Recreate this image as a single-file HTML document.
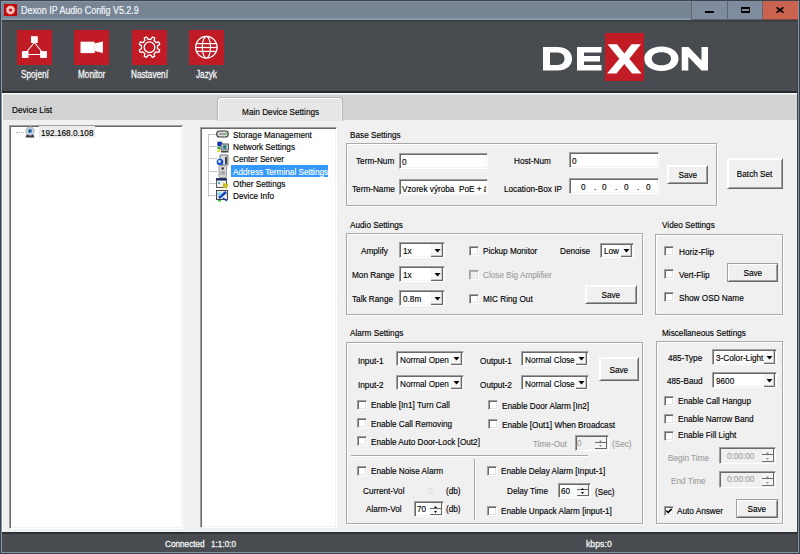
<!DOCTYPE html>
<html><head><meta charset="utf-8">
<style>
*{margin:0;padding:0;box-sizing:border-box}
html,body{width:800px;height:554px;overflow:hidden;background:#f0f0f0}
body{position:relative;font-family:"Liberation Sans",sans-serif;font-size:10px;color:#000}
.a{position:absolute}
.t{position:absolute;white-space:pre;transform-origin:0 0;line-height:12px;-webkit-text-stroke:0.15px currentColor}
.tc{position:absolute;white-space:nowrap;text-align:center;line-height:12px;-webkit-text-stroke:0.15px currentColor}
.tc span{display:inline-block;transform:scaleX(0.82)}
#frame{left:0;top:0;width:800px;height:554px;background:#3c424c}
#ring{left:1px;top:1px;width:798px;height:552px;background:#8593a7}
#title{left:2px;top:2px;width:796px;height:16px;background:#768494}
#hdr{left:2px;top:20px;width:795px;height:73px;background:#484c50;border-bottom:2px solid #282b2e}
#content{left:2px;top:93px;width:795px;height:439px;background:#f0f0f0}
#status{left:2px;top:532px;width:795px;height:20px;background:#484c50;border-top:2px solid #2e3134}
.rb{position:absolute;top:30px;width:35px;height:35px;background:#c11b25}
.lbl{position:absolute;top:69px;color:#f6f6f6;font-size:10px;white-space:nowrap;transform-origin:0 0;transform:scaleX(0.82);-webkit-text-stroke:0.3px #f6f6f6}
</style></head><body>

<div class="a" id="frame"></div>
<div class="a" id="ring"></div>
<div class="a" id="title"></div>
<div class="a" id="hdr"></div>
<div class="a" id="content"></div>
<div class="a" id="status"></div>
<!-- title bar -->
<div class="a" style="left:2px;top:18px;width:796px;height:2px;background:#8595aa"></div>
<div class="a" style="left:2px;top:20px;width:795px;height:2px;background:#3c4043"></div>
<div class="a" style="left:4px;top:4px;width:13px;height:12px;background:#c20a0a"></div>
<svg class="a" style="left:4px;top:4px" width="13" height="12" viewBox="0 0 13 12"><circle cx="6.5" cy="6" r="2.8" fill="none" stroke="#f4c4c0" stroke-width="2.6"/><circle cx="6.5" cy="6" r="4.1" fill="none" stroke="#f4c4c0" stroke-width="0.9" stroke-dasharray="1.3 1"/></svg>
<div class="a" style="left:21px;top:4px;font-size:11px;color:#f4f6fa;white-space:nowrap;transform-origin:0 0;transform:scaleX(0.81);line-height:13px;-webkit-text-stroke:0.2px #f4f6fa">Dexon IP Audio Config V5.2.9</div>
<!-- window buttons -->
<div class="a" style="left:691px;top:1px;width:36px;height:19px;background:#7f8c9d;border-left:1px solid #5d6672;border-bottom:1px solid #5d6672"></div>
<div class="a" style="left:727px;top:1px;width:35px;height:19px;background:#7f8c9d;border-left:1px solid #5d6672;border-bottom:1px solid #5d6672"></div>
<div class="a" style="left:762px;top:1px;width:36px;height:19px;background:#c96350;border-left:1px solid #5d6672;border-bottom:1px solid #7a4a40"></div>
<div class="a" style="left:705px;top:11px;width:9px;height:2px;background:#000"></div>
<div class="a" style="left:741px;top:7px;width:9px;height:6px;border:1px solid #000;border-top-width:2px;border-bottom-width:2px"></div>
<svg class="a" style="left:776px;top:7px" width="8" height="6" viewBox="0 0 8 6"><path d="M0.5 0.3 L7.5 5.7 M7.5 0.3 L0.5 5.7" stroke="#000" stroke-width="1.6"/></svg>
<!-- buttons -->
<div class="rb" style="left:17px"></div>
<div class="rb" style="left:74px"></div>
<div class="rb" style="left:132px"></div>
<div class="rb" style="left:189px"></div>
<svg class="a" style="left:17px;top:30px" width="35" height="35" viewBox="0 0 35 35">
<path d="M17.4 12.5 L9.5 22 M17.4 12.5 L25 22 M11 24.5 H24" fill="none" stroke="#fff" stroke-width="1.1"/>
<rect x="14" y="6.2" width="6.8" height="6.8" fill="#fff"/>
<rect x="4.9" y="21.1" width="6.6" height="6.8" fill="#fff"/>
<rect x="23.1" y="21.1" width="6.8" height="6.8" fill="#fff"/>
</svg>
<svg class="a" style="left:74px;top:30px" width="35" height="35" viewBox="0 0 35 35">
<rect x="6.5" y="11.7" width="14.2" height="11.4" fill="#fff"/>
<path d="M20.5 13.6 L28.9 11.4 L28.9 23.1 L20.5 21.1 Z" fill="#fff"/>
</svg>
<svg class="a" style="left:132px;top:30px" width="35" height="35" viewBox="0 0 35 35">
<g fill="none" stroke="#fff" stroke-width="1.3" stroke-linejoin="round">
<circle cx="17.5" cy="17.2" r="5.3"/>
<path d="M25.50 17.14 L25.38 18.57 L27.71 20.05 L26.74 22.40 L24.04 21.80 L23.12 22.90 L23.20 22.82 L22.10 23.74 L22.70 26.44 L20.35 27.41 L18.87 25.08 L17.44 25.20 L17.56 25.20 L16.13 25.08 L14.65 27.41 L12.30 26.44 L12.90 23.74 L11.80 22.82 L11.88 22.90 L10.96 21.80 L8.26 22.40 L7.29 20.05 L9.62 18.57 L9.50 17.14 L9.50 17.26 L9.62 15.83 L7.29 14.35 L8.26 12.00 L10.96 12.60 L11.88 11.50 L11.80 11.58 L12.90 10.66 L12.30 7.96 L14.65 6.99 L16.13 9.32 L17.56 9.20 L17.44 9.20 L18.87 9.32 L20.35 6.99 L22.70 7.96 L22.10 10.66 L23.20 11.58 L23.12 11.50 L24.04 12.60 L26.74 12.00 L27.71 14.35 L25.38 15.83 L25.50 17.26 Z"/>
</g>
</svg>
<svg class="a" style="left:189px;top:30px" width="35" height="35" viewBox="0 0 35 35">
<g fill="none" stroke="#fff" stroke-width="1.2">
<circle cx="17.4" cy="17.2" r="10.8"/>
<ellipse cx="17.4" cy="17.2" rx="4.1" ry="10.8"/>
<line x1="7.5" y1="13.6" x2="27.3" y2="13.6"/>
<line x1="6.6" y1="17.5" x2="28.2" y2="17.5"/>
<line x1="7.5" y1="21.4" x2="27.3" y2="21.4"/>
</g>
</svg>
<div class="lbl" style="left:21px">Spojení</div>
<div class="lbl" style="left:78px">Monitor</div>
<div class="lbl" style="left:131px">Nastavení</div>
<div class="lbl" style="left:196px">Jazyk</div>
<!-- logo -->
<div class="a" style="left:605px;top:33px;width:39px;height:48px;background:#c11b25"></div>
<svg class="a" style="left:540px;top:40px" width="175" height="40" viewBox="0 0 175 40">
<g fill="#fff">
<path d="M3 7 H17 C28 7 32 13 32 18.7 C32 24.5 28 30.4 17 30.4 H3 Z M10 12.5 V25 H16.5 C22 25 24.5 22.5 24.5 18.7 C24.5 15 22 12.5 16.5 12.5 Z" fill-rule="evenodd"/>
<path d="M37 7 H61.5 V12.5 H44 V16 H60 V21.5 H44 V25 H61.5 V30.4 H37 Z"/>
<path d="M67.5 4.2 H77 L84.3 13.5 L91.5 4.2 H101 L89.3 18.8 L101.5 33.5 H92 L84.3 24 L76.5 33.5 H67 L79.3 18.8 Z"/>
<path d="M121.5 6.5 C131.5 6.5 138.5 11.5 138.5 18.7 C138.5 26 131.5 30.9 121.5 30.9 C111.5 30.9 104.3 26 104.3 18.7 C104.3 11.5 111.5 6.5 121.5 6.5 Z M121.5 12.3 C115.5 12.3 111.8 15 111.8 18.7 C111.8 22.5 115.5 25.2 121.5 25.2 C127.5 25.2 131 22.5 131 18.7 C131 15 127.5 12.3 121.5 12.3 Z" fill-rule="evenodd"/>
<path d="M141.7 7 H148.5 L161.5 20.5 V7 H168 V30.4 H161.5 L148.3 16.8 V30.4 H141.7 Z"/>
</g>
</svg>


<div class="a" style="left:2px;top:93px;width:795px;height:1px;background:#f6f6f6;"></div>
<div class="a" style="left:2px;top:94px;width:795px;height:1px;background:#e6e6e6;"></div>
<div class="a" style="left:2px;top:95px;width:795px;height:25px;background:#d2d2d3;"></div>
<div class="a" style="left:2px;top:93px;width:1px;height:439px;background:#fafafa;"></div>
<div class="a" style="left:797px;top:20px;width:1px;height:532px;background:#3e444c;"></div>
<div class="a" style="left:2px;top:552px;width:796px;height:1px;background:#8593a7;"></div>
<div class="t" style="left:12px;top:104.41px;color:#000;font-size:9.5px;transform:scaleX(0.863157894736842);">Device List</div>
<div class="a" style="left:217px;top:97px;width:126px;height:24px;background:#e6e6e6;border:1px solid #b4b4b4;border-bottom:none;border-radius:4px 4px 0 0;box-shadow:inset 1px 1px 0 #fcfcfc,inset -1px 0 0 #f4f4f4"></div>
<div class="tc" style="left:180.5px;width:200px;top:106.21px;color:#000;font-size:9.5px"><span style="transform:scaleX(0.863157894736842)">Main Device Settings</span></div>
<div class="a" style="left:9px;top:125px;width:174px;height:404px;background:#fff;border-top:1px solid #a0a0a0;border-left:1px solid #a0a0a0;border-right:1px solid #fff;border-bottom:1px solid #fff;box-shadow:inset 1px 1px 0 #696969,inset -1px -1px 0 #f2f2f2"></div>
<div class="a" style="left:16px;top:132px;width:8px;border-top:1px dotted #b0b0b0"></div>
<div class="a" style="left:39px;top:126px;width:56px;height:12px;background:#ececec;"></div>
<div class="t" style="left:41px;top:126.71px;color:#000;font-size:9.5px;transform:scaleX(0.863157894736842);">192.168.0.108</div>
<svg class="a" style="left:24px;top:126px" width="12" height="12" viewBox="0 0 12 12"><path d="M1.5 11.5 L2.5 8.5 H9.5 L10.5 11.5 Z" fill="#3a4048"/><circle cx="6" cy="5" r="4.2" fill="#d0d6dc" stroke="#9aa4ac" stroke-width="0.8"/><circle cx="6" cy="5" r="2.2" fill="#4a90d0"/><circle cx="6" cy="5" r="0.9" fill="#1a3050"/></svg>
<div class="a" style="left:200px;top:127px;width:137px;height:401px;background:#fff;border-top:1px solid #a0a0a0;border-left:1px solid #a0a0a0;border-right:1px solid #fff;border-bottom:1px solid #fff;box-shadow:inset 1px 1px 0 #696969,inset -1px -1px 0 #f2f2f2"></div>
<div class="a" style="left:208px;top:134px;height:63px;border-left:1px solid #c4c4c4"></div>
<div class="a" style="left:209px;top:134.1px;width:8px;border-top:1px solid #c4c4c4"></div>
<div class="t" style="left:233px;top:129.01px;color:#000;font-size:9.5px;transform:scaleX(0.863157894736842);">Storage Management</div>
<div class="a" style="left:209px;top:146.0px;width:8px;border-top:1px solid #c4c4c4"></div>
<div class="t" style="left:233px;top:140.91px;color:#000;font-size:9.5px;transform:scaleX(0.863157894736842);">Network Settings</div>
<div class="a" style="left:209px;top:158.3px;width:8px;border-top:1px solid #c4c4c4"></div>
<div class="t" style="left:233px;top:153.21px;color:#000;font-size:9.5px;transform:scaleX(0.863157894736842);">Center Server</div>
<div class="a" style="left:209px;top:170.9px;width:8px;border-top:1px solid #c4c4c4"></div>
<div class="a" style="left:231px;top:165px;width:97px;height:12px;background:#3399ff;"></div>
<div class="t" style="left:233px;top:165.81px;color:#fff;font-size:9.5px;transform:scaleX(0.863157894736842);">Address Terminal Settings</div>
<div class="a" style="left:209px;top:182.8px;width:8px;border-top:1px solid #c4c4c4"></div>
<div class="t" style="left:233px;top:177.71px;color:#000;font-size:9.5px;transform:scaleX(0.863157894736842);">Other Settings</div>
<div class="a" style="left:209px;top:195.0px;width:8px;border-top:1px solid #c4c4c4"></div>
<div class="t" style="left:233px;top:189.91px;color:#000;font-size:9.5px;transform:scaleX(0.863157894736842);">Device Info</div>
<svg class="a" style="left:216px;top:130px" width="13" height="9" viewBox="0 0 13 9"><rect x="0.8" y="1" width="11.4" height="6" rx="2.5" fill="#dcdcdc" stroke="#3a3a3a" stroke-width="1.2"/><rect x="3" y="3.5" width="6" height="1" fill="#666"/><rect x="9" y="3" width="1.8" height="1.5" fill="#2c2"/></svg>
<svg class="a" style="left:216px;top:141px" width="13" height="12" viewBox="0 0 13 12"><rect x="1" y="0.5" width="5.5" height="5" fill="#8090a0"/><circle cx="3.7" cy="3" r="2.2" fill="#1030d0"/><rect x="5" y="3" width="7.5" height="6" fill="#c8ccd0" stroke="#333" stroke-width="0.8"/><circle cx="8.7" cy="6" r="2" fill="#208080"/><rect x="1.5" y="6" width="2.5" height="2" fill="#2a2"/><rect x="1.5" y="8.5" width="2.5" height="2.5" fill="#dd2"/><rect x="5" y="10" width="7.5" height="1.5" fill="#444"/></svg>
<svg class="a" style="left:216px;top:154px" width="13" height="12" viewBox="0 0 13 12"><path d="M4 1 H12 V11 H4 Z" fill="#d8dce8" stroke="#555" stroke-width="0.8"/><rect x="9" y="3" width="2" height="7" fill="#444"/><circle cx="4" cy="8" r="3.3" fill="#1850c8"/><circle cx="3.5" cy="7.5" r="1.4" fill="#e0e8ff"/></svg>
<svg class="a" style="left:216px;top:165px" width="13" height="13" viewBox="0 0 13 13"><rect x="3" y="0.5" width="7.5" height="12" rx="1.2" fill="#d8d8d8" stroke="#888" stroke-width="0.8"/><circle cx="6.7" cy="3.5" r="1.3" fill="#333"/><rect x="4.5" y="6" width="4.5" height="4" fill="#aaa"/></svg>
<svg class="a" style="left:216px;top:178px" width="13" height="11" viewBox="0 0 13 11"><rect x="0.5" y="0.5" width="10" height="9" fill="#f0f0f0" stroke="#333" stroke-width="0.8"/><rect x="0.5" y="0.5" width="10" height="2" fill="#102060"/><rect x="2" y="4" width="2" height="2" fill="#4ab"/><path d="M7 5 L12.5 6 L11 10.5 L7 10 Z" fill="#c8c020"/></svg>
<svg class="a" style="left:216px;top:190px" width="13" height="12" viewBox="0 0 13 12"><rect x="0.5" y="0.5" width="11" height="9" fill="#e8e8e8" stroke="#333" stroke-width="0.9"/><path d="M3 8 L10 2" stroke="#1040c0" stroke-width="2.5"/><circle cx="3.5" cy="4" r="2" fill="#80d0f0"/><rect x="2" y="10" width="3" height="1.5" fill="#2c2"/><path d="M7 8 L11 11" stroke="#1040c0" stroke-width="1.5"/></svg>
<div class="t" style="left:350px;top:129.21px;color:#000;font-size:9.5px;transform:scaleX(0.863157894736842);">Base Settings</div>
<div class="a" style="left:347px;top:144px;width:371px;height:63px;border:1px solid #fff"></div>
<div class="a" style="left:346px;top:143px;width:371px;height:63px;border:1px solid #a9a9a9"></div>
<div class="t" style="left:355.5px;top:155.11px;color:#000;font-size:9.5px;transform:scaleX(0.863157894736842);">Term-Num</div>
<div class="a" style="left:399px;top:153px;width:89px;height:16px;background:#fff;border-top:1px solid #a0a0a0;border-left:1px solid #a0a0a0;border-right:1px solid #fff;border-bottom:1px solid #fff;box-shadow:inset 1px 1px 0 #696969,inset -1px -1px 0 #f2f2f2"></div>
<div class="t" style="left:401.5px;top:155.91px;color:#000;font-size:9.5px;transform:scaleX(0.863157894736842);">0</div>
<div class="t" style="left:352px;top:182.71px;color:#000;font-size:9.5px;transform:scaleX(0.863157894736842);">Term-Name</div>
<div class="a" style="left:399px;top:179px;width:89px;height:16px;background:#fff;border-top:1px solid #a0a0a0;border-left:1px solid #a0a0a0;border-right:1px solid #fff;border-bottom:1px solid #fff;box-shadow:inset 1px 1px 0 #696969,inset -1px -1px 0 #f2f2f2"></div>
<div class="a" style="left:401px;top:181px;width:85px;height:13px;overflow:hidden">
<div class="t" style="left:0.5px;top:1.91px;color:#000;font-size:9.5px;transform:scaleX(0.863157894736842);">Vzorek výroba  PoE + ä</div>
</div>
<div class="t" style="left:514px;top:155.11px;color:#000;font-size:9.5px;transform:scaleX(0.863157894736842);">Host-Num</div>
<div class="a" style="left:569px;top:152px;width:90px;height:16px;background:#fff;border-top:1px solid #a0a0a0;border-left:1px solid #a0a0a0;border-right:1px solid #fff;border-bottom:1px solid #fff;box-shadow:inset 1px 1px 0 #696969,inset -1px -1px 0 #f2f2f2"></div>
<div class="t" style="left:571.5px;top:154.91px;color:#000;font-size:9.5px;transform:scaleX(0.863157894736842);">0</div>
<div class="t" style="left:503.5px;top:182.71px;color:#000;font-size:9.5px;transform:scaleX(0.863157894736842);">Location-Box IP</div>
<div class="a" style="left:569px;top:178px;width:90px;height:16px;background:#fff;border-top:1px solid #a0a0a0;border-left:1px solid #a0a0a0;border-right:1px solid #fff;border-bottom:1px solid #fff;box-shadow:inset 1px 1px 0 #696969,inset -1px -1px 0 #f2f2f2"></div>
<div class="t" style="left:581px;top:180.71px;color:#000;font-size:9.5px;transform:scaleX(0.863157894736842);">0</div>
<div class="t" style="left:602.3px;top:180.71px;color:#000;font-size:9.5px;transform:scaleX(0.863157894736842);">0</div>
<div class="t" style="left:624px;top:180.71px;color:#000;font-size:9.5px;transform:scaleX(0.863157894736842);">0</div>
<div class="t" style="left:645.9px;top:180.71px;color:#000;font-size:9.5px;transform:scaleX(0.863157894736842);">0</div>
<div class="t" style="left:593.5px;top:180.71px;color:#000;font-size:9.5px;transform:scaleX(0.863157894736842);">.</div>
<div class="t" style="left:615.2px;top:180.71px;color:#000;font-size:9.5px;transform:scaleX(0.863157894736842);">.</div>
<div class="t" style="left:636.7px;top:180.71px;color:#000;font-size:9.5px;transform:scaleX(0.863157894736842);">.</div>
<div class="a" style="left:667px;top:165px;width:41px;height:19px;background:#f0f0f0;border-top:1px solid #fff;border-left:1px solid #fff;border-right:1px solid #696969;border-bottom:1px solid #696969;box-shadow:inset 1px 1px 0 #fff,inset -1px -1px 0 #a0a0a0"></div>
<div class="tc" style="left:587.5px;width:200px;top:168.81px;color:#000;font-size:9.5px"><span style="transform:scaleX(0.863157894736842)">Save</span></div>
<div class="a" style="left:727px;top:158px;width:56px;height:31px;background:#f0f0f0;border-top:1px solid #fff;border-left:1px solid #fff;border-right:1px solid #696969;border-bottom:1px solid #696969;box-shadow:inset 1px 1px 0 #fff,inset -1px -1px 0 #a0a0a0"></div>
<div class="tc" style="left:655.0px;width:200px;top:168.01px;color:#000;font-size:9.5px"><span style="transform:scaleX(0.863157894736842)">Batch Set</span></div>
<div class="t" style="left:350px;top:218.91px;color:#000;font-size:9.5px;transform:scaleX(0.863157894736842);">Audio Settings</div>
<div class="a" style="left:347px;top:234px;width:297px;height:82px;border:1px solid #fff"></div>
<div class="a" style="left:346px;top:233px;width:297px;height:82px;border:1px solid #a9a9a9"></div>
<div class="t" style="left:360.6px;top:244.91px;color:#000;font-size:9.5px;transform:scaleX(0.863157894736842);">Amplify</div>
<div class="a" style="left:399px;top:242px;width:46px;height:16px;background:#fff;border-top:1px solid #a0a0a0;border-left:1px solid #a0a0a0;border-right:1px solid #fff;border-bottom:1px solid #fff;box-shadow:inset 1px 1px 0 #696969,inset -1px -1px 0 #f2f2f2"></div>
<div class="a" style="left:431px;top:244px;width:12px;height:13px;background:#f6f6f6;border-right:1px solid #696969;border-bottom:1px solid #696969;box-shadow:inset -1px -1px 0 #c8c8c8"></div>
<svg class="a" style="left:433.5px;top:248.5px" width="7" height="4" viewBox="0 0 7 4"><path d="M0.5 0 H6.5 L3.5 3.5 Z" fill="#000"/></svg>
<div class="a" style="left:401px;top:244px;width:30px;height:12px;overflow:hidden">
<div class="t" style="left:1.5px;top:1.21px;color:#000;font-size:9.5px;transform:scaleX(0.863157894736842);">1x</div>
</div>
<div class="t" style="left:352px;top:268.71px;color:#000;font-size:9.5px;transform:scaleX(0.863157894736842);">Mon Range</div>
<div class="a" style="left:399px;top:266px;width:46px;height:16px;background:#fff;border-top:1px solid #a0a0a0;border-left:1px solid #a0a0a0;border-right:1px solid #fff;border-bottom:1px solid #fff;box-shadow:inset 1px 1px 0 #696969,inset -1px -1px 0 #f2f2f2"></div>
<div class="a" style="left:431px;top:268px;width:12px;height:13px;background:#f6f6f6;border-right:1px solid #696969;border-bottom:1px solid #696969;box-shadow:inset -1px -1px 0 #c8c8c8"></div>
<svg class="a" style="left:433.5px;top:272.5px" width="7" height="4" viewBox="0 0 7 4"><path d="M0.5 0 H6.5 L3.5 3.5 Z" fill="#000"/></svg>
<div class="a" style="left:401px;top:268px;width:30px;height:12px;overflow:hidden">
<div class="t" style="left:1.5px;top:0.91px;color:#000;font-size:9.5px;transform:scaleX(0.863157894736842);">1x</div>
</div>
<div class="t" style="left:352px;top:292.61px;color:#000;font-size:9.5px;transform:scaleX(0.863157894736842);">Talk Range</div>
<div class="a" style="left:399px;top:290px;width:46px;height:16px;background:#fff;border-top:1px solid #a0a0a0;border-left:1px solid #a0a0a0;border-right:1px solid #fff;border-bottom:1px solid #fff;box-shadow:inset 1px 1px 0 #696969,inset -1px -1px 0 #f2f2f2"></div>
<div class="a" style="left:431px;top:292px;width:12px;height:13px;background:#f6f6f6;border-right:1px solid #696969;border-bottom:1px solid #696969;box-shadow:inset -1px -1px 0 #c8c8c8"></div>
<svg class="a" style="left:433.5px;top:296.5px" width="7" height="4" viewBox="0 0 7 4"><path d="M0.5 0 H6.5 L3.5 3.5 Z" fill="#000"/></svg>
<div class="a" style="left:401px;top:292px;width:30px;height:12px;overflow:hidden">
<div class="t" style="left:1.5px;top:0.91px;color:#000;font-size:9.5px;transform:scaleX(0.863157894736842);">0.8m</div>
</div>
<div class="a" style="left:469px;top:246px;width:9.5px;height:9.5px;background:#fff;border-top:1px solid #a0a0a0;border-left:1px solid #a0a0a0;border-right:1px solid #fff;border-bottom:1px solid #fff;box-shadow:inset 1px 1px 0 #696969,inset -1px -1px 0 #e3e3e3"></div>
<div class="t" style="left:482.7px;top:245.41px;color:#000;font-size:9.5px;transform:scaleX(0.863157894736842);">Pickup Monitor</div>
<div class="a" style="left:469px;top:270px;width:9.5px;height:9.5px;background:#f0f0f0;border-top:1px solid #a0a0a0;border-left:1px solid #a0a0a0;border-right:1px solid #fff;border-bottom:1px solid #fff;box-shadow:inset 1px 1px 0 #b0b0b0,inset -1px -1px 0 #e3e3e3"></div>
<div class="t" style="left:482.7px;top:269.21px;color:#a0a0a0;font-size:9.5px;transform:scaleX(0.863157894736842);">Close Big Amplifier</div>
<div class="a" style="left:469px;top:294px;width:9.5px;height:9.5px;background:#fff;border-top:1px solid #a0a0a0;border-left:1px solid #a0a0a0;border-right:1px solid #fff;border-bottom:1px solid #fff;box-shadow:inset 1px 1px 0 #696969,inset -1px -1px 0 #e3e3e3"></div>
<div class="t" style="left:482.7px;top:293.01px;color:#000;font-size:9.5px;transform:scaleX(0.863157894736842);">MIC Ring Out</div>
<div class="t" style="left:560px;top:245.41px;color:#000;font-size:9.5px;transform:scaleX(0.863157894736842);">Denoise</div>
<div class="a" style="left:600px;top:243px;width:34px;height:15px;background:#fff;border-top:1px solid #a0a0a0;border-left:1px solid #a0a0a0;border-right:1px solid #fff;border-bottom:1px solid #fff;box-shadow:inset 1px 1px 0 #696969,inset -1px -1px 0 #f2f2f2"></div>
<div class="a" style="left:621px;top:245px;width:11px;height:12px;background:#f6f6f6;border-right:1px solid #696969;border-bottom:1px solid #696969;box-shadow:inset -1px -1px 0 #c8c8c8"></div>
<svg class="a" style="left:623.0px;top:249.0px" width="7" height="4" viewBox="0 0 7 4"><path d="M0.5 0 H6.5 L3.5 3.5 Z" fill="#000"/></svg>
<div class="a" style="left:602px;top:245px;width:19px;height:11px;overflow:hidden">
<div class="t" style="left:1.5px;top:0.41px;color:#000;font-size:9.5px;transform:scaleX(0.863157894736842);">Low</div>
</div>
<div class="a" style="left:585px;top:285px;width:52px;height:19px;background:#f0f0f0;border-top:1px solid #fff;border-left:1px solid #fff;border-right:1px solid #696969;border-bottom:1px solid #696969;box-shadow:inset 1px 1px 0 #fff,inset -1px -1px 0 #a0a0a0"></div>
<div class="tc" style="left:511.0px;width:200px;top:289.41px;color:#000;font-size:9.5px"><span style="transform:scaleX(0.863157894736842)">Save</span></div>
<div class="t" style="left:662px;top:218.91px;color:#000;font-size:9.5px;transform:scaleX(0.863157894736842);">Video Settings</div>
<div class="a" style="left:656px;top:235px;width:128px;height:81px;border:1px solid #fff"></div>
<div class="a" style="left:655px;top:234px;width:128px;height:81px;border:1px solid #a9a9a9"></div>
<div class="a" style="left:664px;top:246px;width:9.5px;height:9.5px;background:#fff;border-top:1px solid #a0a0a0;border-left:1px solid #a0a0a0;border-right:1px solid #fff;border-bottom:1px solid #fff;box-shadow:inset 1px 1px 0 #696969,inset -1px -1px 0 #e3e3e3"></div>
<div class="t" style="left:679px;top:246.01px;color:#000;font-size:9.5px;transform:scaleX(0.863157894736842);">Horiz-Flip</div>
<div class="a" style="left:664px;top:269px;width:9.5px;height:9.5px;background:#fff;border-top:1px solid #a0a0a0;border-left:1px solid #a0a0a0;border-right:1px solid #fff;border-bottom:1px solid #fff;box-shadow:inset 1px 1px 0 #696969,inset -1px -1px 0 #e3e3e3"></div>
<div class="t" style="left:679px;top:268.91px;color:#000;font-size:9.5px;transform:scaleX(0.863157894736842);">Vert-Flip</div>
<div class="a" style="left:664px;top:292px;width:9.5px;height:9.5px;background:#fff;border-top:1px solid #a0a0a0;border-left:1px solid #a0a0a0;border-right:1px solid #fff;border-bottom:1px solid #fff;box-shadow:inset 1px 1px 0 #696969,inset -1px -1px 0 #e3e3e3"></div>
<div class="t" style="left:679px;top:291.91px;color:#000;font-size:9.5px;transform:scaleX(0.863157894736842);">Show OSD Name</div>
<div class="a" style="left:727px;top:263px;width:51px;height:19px;background:#f0f0f0;border-top:1px solid #a0a0a0;border-left:1px solid #a0a0a0;border-right:1px solid #696969;border-bottom:1px solid #696969;box-shadow:inset 1px 1px 0 #fff,inset -1px -1px 0 #a0a0a0"></div>
<div class="tc" style="left:652.5px;width:200px;top:267.31px;color:#000;font-size:9.5px"><span style="transform:scaleX(0.863157894736842)">Save</span></div>
<div class="t" style="left:350px;top:326.61px;color:#000;font-size:9.5px;transform:scaleX(0.863157894736842);">Alarm Settings</div>
<div class="a" style="left:347px;top:343px;width:297px;height:182px;border:1px solid #fff"></div>
<div class="a" style="left:346px;top:342px;width:297px;height:182px;border:1px solid #a9a9a9"></div>
<div class="t" style="left:357.5px;top:354.71px;color:#000;font-size:9.5px;transform:scaleX(0.863157894736842);">Input-1</div>
<div class="a" style="left:396px;top:351px;width:68px;height:15px;background:#fff;border-top:1px solid #a0a0a0;border-left:1px solid #a0a0a0;border-right:1px solid #fff;border-bottom:1px solid #fff;box-shadow:inset 1px 1px 0 #696969,inset -1px -1px 0 #f2f2f2"></div>
<div class="a" style="left:451px;top:353px;width:11px;height:12px;background:#f6f6f6;border-right:1px solid #696969;border-bottom:1px solid #696969;box-shadow:inset -1px -1px 0 #c8c8c8"></div>
<svg class="a" style="left:453.0px;top:357.0px" width="7" height="4" viewBox="0 0 7 4"><path d="M0.5 0 H6.5 L3.5 3.5 Z" fill="#000"/></svg>
<div class="a" style="left:398px;top:353px;width:53px;height:11px;overflow:hidden">
<div class="t" style="left:1.5px;top:0.61px;color:#000;font-size:9.5px;transform:scaleX(0.863157894736842);">Normal Open</div>
</div>
<div class="t" style="left:357.5px;top:378.71px;color:#000;font-size:9.5px;transform:scaleX(0.863157894736842);">Input-2</div>
<div class="a" style="left:396px;top:375px;width:68px;height:15px;background:#fff;border-top:1px solid #a0a0a0;border-left:1px solid #a0a0a0;border-right:1px solid #fff;border-bottom:1px solid #fff;box-shadow:inset 1px 1px 0 #696969,inset -1px -1px 0 #f2f2f2"></div>
<div class="a" style="left:451px;top:377px;width:11px;height:12px;background:#f6f6f6;border-right:1px solid #696969;border-bottom:1px solid #696969;box-shadow:inset -1px -1px 0 #c8c8c8"></div>
<svg class="a" style="left:453.0px;top:381.0px" width="7" height="4" viewBox="0 0 7 4"><path d="M0.5 0 H6.5 L3.5 3.5 Z" fill="#000"/></svg>
<div class="a" style="left:398px;top:377px;width:53px;height:11px;overflow:hidden">
<div class="t" style="left:1.5px;top:0.61px;color:#000;font-size:9.5px;transform:scaleX(0.863157894736842);">Normal Open</div>
</div>
<div class="t" style="left:479.5px;top:354.71px;color:#000;font-size:9.5px;transform:scaleX(0.863157894736842);">Output-1</div>
<div class="a" style="left:521px;top:351px;width:68px;height:15px;background:#fff;border-top:1px solid #a0a0a0;border-left:1px solid #a0a0a0;border-right:1px solid #fff;border-bottom:1px solid #fff;box-shadow:inset 1px 1px 0 #696969,inset -1px -1px 0 #f2f2f2"></div>
<div class="a" style="left:576px;top:353px;width:11px;height:12px;background:#f6f6f6;border-right:1px solid #696969;border-bottom:1px solid #696969;box-shadow:inset -1px -1px 0 #c8c8c8"></div>
<svg class="a" style="left:578.0px;top:357.0px" width="7" height="4" viewBox="0 0 7 4"><path d="M0.5 0 H6.5 L3.5 3.5 Z" fill="#000"/></svg>
<div class="a" style="left:523px;top:353px;width:53px;height:11px;overflow:hidden">
<div class="t" style="left:1.5px;top:0.61px;color:#000;font-size:9.5px;transform:scaleX(0.863157894736842);">Normal Close</div>
</div>
<div class="t" style="left:479.5px;top:378.71px;color:#000;font-size:9.5px;transform:scaleX(0.863157894736842);">Output-2</div>
<div class="a" style="left:521px;top:375px;width:68px;height:15px;background:#fff;border-top:1px solid #a0a0a0;border-left:1px solid #a0a0a0;border-right:1px solid #fff;border-bottom:1px solid #fff;box-shadow:inset 1px 1px 0 #696969,inset -1px -1px 0 #f2f2f2"></div>
<div class="a" style="left:576px;top:377px;width:11px;height:12px;background:#f6f6f6;border-right:1px solid #696969;border-bottom:1px solid #696969;box-shadow:inset -1px -1px 0 #c8c8c8"></div>
<svg class="a" style="left:578.0px;top:381.0px" width="7" height="4" viewBox="0 0 7 4"><path d="M0.5 0 H6.5 L3.5 3.5 Z" fill="#000"/></svg>
<div class="a" style="left:523px;top:377px;width:53px;height:11px;overflow:hidden">
<div class="t" style="left:1.5px;top:0.61px;color:#000;font-size:9.5px;transform:scaleX(0.863157894736842);">Normal Close</div>
</div>
<div class="a" style="left:599px;top:357px;width:40px;height:24px;background:#f0f0f0;border-top:1px solid #fff;border-left:1px solid #fff;border-right:1px solid #696969;border-bottom:1px solid #696969;box-shadow:inset 1px 1px 0 #fff,inset -1px -1px 0 #a0a0a0"></div>
<div class="tc" style="left:519.0px;width:200px;top:363.91px;color:#000;font-size:9.5px"><span style="transform:scaleX(0.863157894736842)">Save</span></div>
<div class="a" style="left:357px;top:400px;width:9.5px;height:9.5px;background:#fff;border-top:1px solid #a0a0a0;border-left:1px solid #a0a0a0;border-right:1px solid #fff;border-bottom:1px solid #fff;box-shadow:inset 1px 1px 0 #696969,inset -1px -1px 0 #e3e3e3"></div>
<div class="t" style="left:371px;top:399.11px;color:#000;font-size:9.5px;transform:scaleX(0.863157894736842);">Enable [In1] Turn Call</div>
<div class="a" style="left:357px;top:418px;width:9.5px;height:9.5px;background:#fff;border-top:1px solid #a0a0a0;border-left:1px solid #a0a0a0;border-right:1px solid #fff;border-bottom:1px solid #fff;box-shadow:inset 1px 1px 0 #696969,inset -1px -1px 0 #e3e3e3"></div>
<div class="t" style="left:371px;top:417.91px;color:#000;font-size:9.5px;transform:scaleX(0.863157894736842);">Enable Call Removing</div>
<div class="a" style="left:357px;top:436px;width:9.5px;height:9.5px;background:#fff;border-top:1px solid #a0a0a0;border-left:1px solid #a0a0a0;border-right:1px solid #fff;border-bottom:1px solid #fff;box-shadow:inset 1px 1px 0 #696969,inset -1px -1px 0 #e3e3e3"></div>
<div class="t" style="left:371px;top:435.91px;color:#000;font-size:9.5px;transform:scaleX(0.863157894736842);">Enable Auto Door-Lock [Out2]</div>
<div class="a" style="left:488px;top:400px;width:9.5px;height:9.5px;background:#fff;border-top:1px solid #a0a0a0;border-left:1px solid #a0a0a0;border-right:1px solid #fff;border-bottom:1px solid #fff;box-shadow:inset 1px 1px 0 #696969,inset -1px -1px 0 #e3e3e3"></div>
<div class="t" style="left:502px;top:399.71px;color:#000;font-size:9.5px;transform:scaleX(0.863157894736842);">Enable Door Alarm [In2]</div>
<div class="a" style="left:488px;top:419px;width:9.5px;height:9.5px;background:#fff;border-top:1px solid #a0a0a0;border-left:1px solid #a0a0a0;border-right:1px solid #fff;border-bottom:1px solid #fff;box-shadow:inset 1px 1px 0 #696969,inset -1px -1px 0 #e3e3e3"></div>
<div class="t" style="left:502px;top:418.71px;color:#000;font-size:9.5px;transform:scaleX(0.863157894736842);">Enable [Out1] When Broadcast</div>
<div class="t" style="left:532.6px;top:438.11px;color:#a0a0a0;font-size:9.5px;transform:scaleX(0.863157894736842);">Time-Out</div>
<div class="a" style="left:575px;top:435px;width:34px;height:16px;background:#f0f0f0;border-top:1px solid #a0a0a0;border-left:1px solid #a0a0a0;border-right:1px solid #fff;border-bottom:1px solid #fff;box-shadow:inset 1px 1px 0 #696969,inset -1px -1px 0 #f2f2f2"></div>
<div class="a" style="left:595px;top:437px;width:12px;height:6px;background:#f4f4f4;border-right:1px solid #696969;border-bottom:1px solid #696969"></div>
<div class="a" style="left:595px;top:443px;width:12px;height:6px;background:#f4f4f4;border-right:1px solid #696969;border-bottom:1px solid #696969"></div>
<svg class="a" style="left:599.0px;top:439.5px" width="3" height="2" viewBox="0 0 3 2"><path d="M0 2 H3 L1.5 0 Z" fill="#909090"/></svg>
<svg class="a" style="left:599.0px;top:445.0px" width="3" height="2" viewBox="0 0 3 2"><path d="M0 0 H3 L1.5 2 Z" fill="#909090"/></svg>
<div class="t" style="left:577.4px;top:437.41px;color:#a0a0a0;font-size:9.5px;transform:scaleX(0.863157894736842);">0</div>
<div class="t" style="left:611.7px;top:438.11px;color:#a0a0a0;font-size:9.5px;transform:scaleX(0.863157894736842);">(Sec)</div>
<div class="a" style="left:351px;top:455px;width:237px;height:1px;background:#a9a9a9;"></div>
<div class="a" style="left:351px;top:456px;width:237px;height:1px;background:#fff;"></div>
<div class="a" style="left:474px;top:459px;width:1px;height:61px;background:#a9a9a9;"></div>
<div class="a" style="left:475px;top:459px;width:1px;height:61px;background:#fff;"></div>
<div class="a" style="left:357px;top:466px;width:9.5px;height:9.5px;background:#fff;border-top:1px solid #a0a0a0;border-left:1px solid #a0a0a0;border-right:1px solid #fff;border-bottom:1px solid #fff;box-shadow:inset 1px 1px 0 #696969,inset -1px -1px 0 #e3e3e3"></div>
<div class="t" style="left:370.6px;top:465.01px;color:#000;font-size:9.5px;transform:scaleX(0.863157894736842);">Enable Noise Alarm</div>
<div class="t" style="left:363.2px;top:484.91px;color:#000;font-size:9.5px;transform:scaleX(0.863157894736842);">Current-Vol</div>
<div class="t" style="left:427.5px;top:484.91px;color:#dcdcdc;font-size:9.5px;transform:scaleX(0.863157894736842);">0</div>
<div class="t" style="left:446.2px;top:484.91px;color:#000;font-size:9.5px;transform:scaleX(0.863157894736842);">(db)</div>
<div class="t" style="left:366px;top:502.91px;color:#000;font-size:9.5px;transform:scaleX(0.863157894736842);">Alarm-Vol</div>
<div class="a" style="left:414px;top:501px;width:30px;height:16px;background:#fff;border-top:1px solid #a0a0a0;border-left:1px solid #a0a0a0;border-right:1px solid #fff;border-bottom:1px solid #fff;box-shadow:inset 1px 1px 0 #696969,inset -1px -1px 0 #f2f2f2"></div>
<div class="a" style="left:430px;top:503px;width:12px;height:6px;background:#f4f4f4;border-right:1px solid #696969;border-bottom:1px solid #696969"></div>
<div class="a" style="left:430px;top:509px;width:12px;height:6px;background:#f4f4f4;border-right:1px solid #696969;border-bottom:1px solid #696969"></div>
<svg class="a" style="left:434.0px;top:505.5px" width="3" height="2" viewBox="0 0 3 2"><path d="M0 2 H3 L1.5 0 Z" fill="#000"/></svg>
<svg class="a" style="left:434.0px;top:511.0px" width="3" height="2" viewBox="0 0 3 2"><path d="M0 0 H3 L1.5 2 Z" fill="#000"/></svg>
<div class="t" style="left:417.2px;top:503.41px;color:#000;font-size:9.5px;transform:scaleX(0.863157894736842);">70</div>
<div class="t" style="left:446.2px;top:502.91px;color:#000;font-size:9.5px;transform:scaleX(0.863157894736842);">(db)</div>
<div class="a" style="left:487px;top:466px;width:9.5px;height:9.5px;background:#fff;border-top:1px solid #a0a0a0;border-left:1px solid #a0a0a0;border-right:1px solid #fff;border-bottom:1px solid #fff;box-shadow:inset 1px 1px 0 #696969,inset -1px -1px 0 #e3e3e3"></div>
<div class="t" style="left:501px;top:465.11px;color:#000;font-size:9.5px;transform:scaleX(0.863157894736842);">Enable Delay Alarm [Input-1]</div>
<div class="t" style="left:507px;top:485.41px;color:#000;font-size:9.5px;transform:scaleX(0.863157894736842);">Delay Time</div>
<div class="a" style="left:558px;top:483px;width:33px;height:15px;background:#fff;border-top:1px solid #a0a0a0;border-left:1px solid #a0a0a0;border-right:1px solid #fff;border-bottom:1px solid #fff;box-shadow:inset 1px 1px 0 #696969,inset -1px -1px 0 #f2f2f2"></div>
<div class="a" style="left:577px;top:485px;width:12px;height:5px;background:#f4f4f4;border-right:1px solid #696969;border-bottom:1px solid #696969"></div>
<div class="a" style="left:577px;top:490px;width:12px;height:6px;background:#f4f4f4;border-right:1px solid #696969;border-bottom:1px solid #696969"></div>
<svg class="a" style="left:581.0px;top:487.5px" width="3" height="2" viewBox="0 0 3 2"><path d="M0 2 H3 L1.5 0 Z" fill="#000"/></svg>
<svg class="a" style="left:581.0px;top:492.0px" width="3" height="2" viewBox="0 0 3 2"><path d="M0 0 H3 L1.5 2 Z" fill="#000"/></svg>
<div class="t" style="left:560.6px;top:485.01px;color:#000;font-size:9.5px;transform:scaleX(0.863157894736842);">60</div>
<div class="t" style="left:594.5px;top:485.91px;color:#000;font-size:9.5px;transform:scaleX(0.863157894736842);">(Sec)</div>
<div class="a" style="left:487px;top:506px;width:9.5px;height:9.5px;background:#fff;border-top:1px solid #a0a0a0;border-left:1px solid #a0a0a0;border-right:1px solid #fff;border-bottom:1px solid #fff;box-shadow:inset 1px 1px 0 #696969,inset -1px -1px 0 #e3e3e3"></div>
<div class="t" style="left:501px;top:504.81px;color:#000;font-size:9.5px;transform:scaleX(0.863157894736842);">Enable Unpack Alarm [input-1]</div>
<div class="t" style="left:662px;top:326.61px;color:#000;font-size:9.5px;transform:scaleX(0.863157894736842);">Miscellaneous Settings</div>
<div class="a" style="left:657px;top:342px;width:127px;height:183px;border:1px solid #fff"></div>
<div class="a" style="left:656px;top:341px;width:127px;height:183px;border:1px solid #a9a9a9"></div>
<div class="t" style="left:667.9px;top:352.31px;color:#000;font-size:9.5px;transform:scaleX(0.863157894736842);">485-Type</div>
<div class="a" style="left:712px;top:349px;width:65px;height:16px;background:#fff;border-top:1px solid #a0a0a0;border-left:1px solid #a0a0a0;border-right:1px solid #fff;border-bottom:1px solid #fff;box-shadow:inset 1px 1px 0 #696969,inset -1px -1px 0 #f2f2f2"></div>
<div class="a" style="left:764px;top:351px;width:11px;height:13px;background:#f6f6f6;border-right:1px solid #696969;border-bottom:1px solid #696969;box-shadow:inset -1px -1px 0 #c8c8c8"></div>
<svg class="a" style="left:766.0px;top:355.5px" width="7" height="4" viewBox="0 0 7 4"><path d="M0.5 0 H6.5 L3.5 3.5 Z" fill="#000"/></svg>
<div class="a" style="left:714px;top:351px;width:50px;height:12px;overflow:hidden">
<div class="t" style="left:1.5px;top:0.91px;color:#000;font-size:9.5px;transform:scaleX(0.863157894736842);">3-Color-Light</div>
</div>
<div class="t" style="left:667.3px;top:375.01px;color:#000;font-size:9.5px;transform:scaleX(0.863157894736842);">485-Baud</div>
<div class="a" style="left:712px;top:372px;width:65px;height:16px;background:#fff;border-top:1px solid #a0a0a0;border-left:1px solid #a0a0a0;border-right:1px solid #fff;border-bottom:1px solid #fff;box-shadow:inset 1px 1px 0 #696969,inset -1px -1px 0 #f2f2f2"></div>
<div class="a" style="left:764px;top:374px;width:11px;height:13px;background:#f6f6f6;border-right:1px solid #696969;border-bottom:1px solid #696969;box-shadow:inset -1px -1px 0 #c8c8c8"></div>
<svg class="a" style="left:766.0px;top:378.5px" width="7" height="4" viewBox="0 0 7 4"><path d="M0.5 0 H6.5 L3.5 3.5 Z" fill="#000"/></svg>
<div class="a" style="left:714px;top:374px;width:50px;height:12px;overflow:hidden">
<div class="t" style="left:1.5px;top:0.91px;color:#000;font-size:9.5px;transform:scaleX(0.863157894736842);">9600</div>
</div>
<div class="a" style="left:664px;top:396px;width:9.5px;height:9.5px;background:#fff;border-top:1px solid #a0a0a0;border-left:1px solid #a0a0a0;border-right:1px solid #fff;border-bottom:1px solid #fff;box-shadow:inset 1px 1px 0 #696969,inset -1px -1px 0 #e3e3e3"></div>
<div class="t" style="left:678.1px;top:394.91px;color:#000;font-size:9.5px;transform:scaleX(0.863157894736842);">Enable Call Hangup</div>
<div class="a" style="left:664px;top:414px;width:9.5px;height:9.5px;background:#fff;border-top:1px solid #a0a0a0;border-left:1px solid #a0a0a0;border-right:1px solid #fff;border-bottom:1px solid #fff;box-shadow:inset 1px 1px 0 #696969,inset -1px -1px 0 #e3e3e3"></div>
<div class="t" style="left:678.1px;top:412.61px;color:#000;font-size:9.5px;transform:scaleX(0.863157894736842);">Enable Narrow Band</div>
<div class="a" style="left:664px;top:431px;width:9.5px;height:9.5px;background:#fff;border-top:1px solid #a0a0a0;border-left:1px solid #a0a0a0;border-right:1px solid #fff;border-bottom:1px solid #fff;box-shadow:inset 1px 1px 0 #696969,inset -1px -1px 0 #e3e3e3"></div>
<div class="t" style="left:678.1px;top:429.01px;color:#000;font-size:9.5px;transform:scaleX(0.863157894736842);">Enable Fill Light</div>
<div class="t" style="left:668.2px;top:452.01px;color:#a0a0a0;font-size:9.5px;transform:scaleX(0.863157894736842);">Begin Time</div>
<div class="a" style="left:719px;top:447px;width:57px;height:17px;background:#f0f0f0;border-top:1px solid #a0a0a0;border-left:1px solid #a0a0a0;border-right:1px solid #fff;border-bottom:1px solid #fff;box-shadow:inset 1px 1px 0 #696969,inset -1px -1px 0 #f2f2f2"></div>
<div class="a" style="left:762px;top:449px;width:12px;height:6px;background:#f4f4f4;border-right:1px solid #696969;border-bottom:1px solid #696969"></div>
<div class="a" style="left:762px;top:455px;width:12px;height:7px;background:#f4f4f4;border-right:1px solid #696969;border-bottom:1px solid #696969"></div>
<svg class="a" style="left:766.0px;top:451.5px" width="3" height="2" viewBox="0 0 3 2"><path d="M0 2 H3 L1.5 0 Z" fill="#909090"/></svg>
<svg class="a" style="left:766.0px;top:458.0px" width="3" height="2" viewBox="0 0 3 2"><path d="M0 0 H3 L1.5 2 Z" fill="#909090"/></svg>
<div class="t" style="left:727.2px;top:449.61px;color:#a0a0a0;font-size:9.5px;transform:scaleX(0.863157894736842);">0:00:00</div>
<div class="t" style="left:671px;top:474.91px;color:#a0a0a0;font-size:9.5px;transform:scaleX(0.863157894736842);">End Time</div>
<div class="a" style="left:719px;top:471px;width:57px;height:17px;background:#f0f0f0;border-top:1px solid #a0a0a0;border-left:1px solid #a0a0a0;border-right:1px solid #fff;border-bottom:1px solid #fff;box-shadow:inset 1px 1px 0 #696969,inset -1px -1px 0 #f2f2f2"></div>
<div class="a" style="left:762px;top:473px;width:12px;height:6px;background:#f4f4f4;border-right:1px solid #696969;border-bottom:1px solid #696969"></div>
<div class="a" style="left:762px;top:479px;width:12px;height:7px;background:#f4f4f4;border-right:1px solid #696969;border-bottom:1px solid #696969"></div>
<svg class="a" style="left:766.0px;top:475.5px" width="3" height="2" viewBox="0 0 3 2"><path d="M0 2 H3 L1.5 0 Z" fill="#909090"/></svg>
<svg class="a" style="left:766.0px;top:482.0px" width="3" height="2" viewBox="0 0 3 2"><path d="M0 0 H3 L1.5 2 Z" fill="#909090"/></svg>
<div class="t" style="left:727.2px;top:473.41px;color:#a0a0a0;font-size:9.5px;transform:scaleX(0.863157894736842);">0:00:00</div>
<div class="a" style="left:664px;top:506px;width:9.5px;height:9.5px;background:#fff;border-top:1px solid #a0a0a0;border-left:1px solid #a0a0a0;border-right:1px solid #fff;border-bottom:1px solid #fff;box-shadow:inset 1px 1px 0 #696969,inset -1px -1px 0 #e3e3e3"></div>
<svg class="a" style="left:666px;top:508px" width="6" height="6" viewBox="0 0 6 6"><path d="M0.4 2.6 L2.2 4.6 L5.6 0.9" fill="none" stroke="#000" stroke-width="1.6"/></svg>
<div class="t" style="left:677.3px;top:505.31px;color:#000;font-size:9.5px;transform:scaleX(0.863157894736842);">Auto Answer</div>
<div class="a" style="left:736px;top:499px;width:42px;height:19px;background:#f0f0f0;border-top:1px solid #a0a0a0;border-left:1px solid #a0a0a0;border-right:1px solid #696969;border-bottom:1px solid #696969;box-shadow:inset 1px 1px 0 #fff,inset -1px -1px 0 #a0a0a0"></div>
<div class="tc" style="left:657.0px;width:200px;top:503.41px;color:#000;font-size:9.5px"><span style="transform:scaleX(0.863157894736842)">Save</span></div>
<div class="t" style="left:164.5px;top:538.41px;color:#f4f4f4;font-size:9.5px;transform:scaleX(0.863157894736842);-webkit-text-stroke:0.3px #f4f4f4">Connected</div>
<div class="t" style="left:211.3px;top:538.41px;color:#f4f4f4;font-size:9.5px;transform:scaleX(0.863157894736842);-webkit-text-stroke:0.3px #f4f4f4">1:1:0:0</div>
<div class="t" style="left:586.1px;top:538.41px;color:#f4f4f4;font-size:9.5px;transform:scaleX(0.92);-webkit-text-stroke:0.3px #f4f4f4">kbps:0</div>
</body></html>
